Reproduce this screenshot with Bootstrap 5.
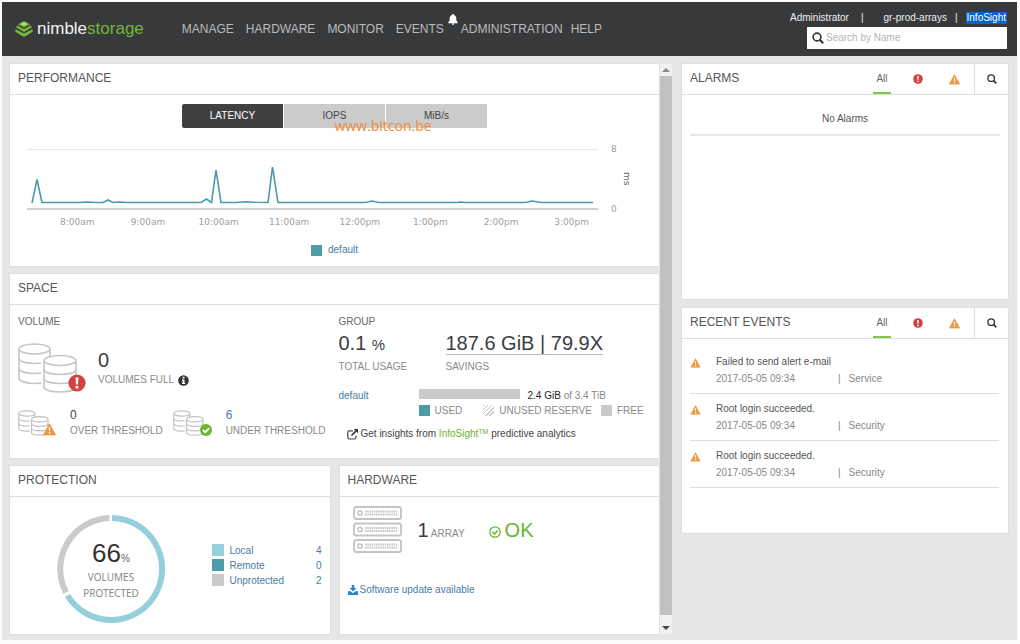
<!DOCTYPE html>
<html lang="en">
<head>
<meta charset="utf-8">
<meta name="viewport" content="width=device-width, initial-scale=1">
<title>Nimble Storage – gr-prod-arrays</title>
<link href="https://cdn.jsdelivr.net/npm/bootstrap@5.3.0/dist/css/bootstrap.min.css" rel="stylesheet">
<style>
:root { --line:#dedede; --teal:#4b9ca8; --aqua:#95cfdb; --silver:#cacaca; --leaf:#6ab42d; --link:#4a7ba6; }
body { font-family:"Liberation Sans",Arial,sans-serif; font-size:10px; line-height:16px; color:#666; background:#fcfcfc; }
a { color:var(--link); text-decoration:none; }
button { font:inherit; color:inherit; background:none; border:0; padding:0; }
svg { display:block; flex:none; }
h2,h3 { margin:0; font-weight:400; }
.app { min-height:calc(100vh - 6px); margin:2px 3px 4px 2px; background:#e6e6e6; }
.topbar { min-height:54px; background:#38393b; padding:0 10px 0 13px; }
.brand-name { font-size:17px; line-height:24px; color:#f2f2f2; }
.brand-name span { color:#75b63b; }
.main-nav { font-size:12px; gap:12px; margin-left:38px; }
.main-nav a { color:#bcbcbc; }
.bell { top:-7px; right:-14px; }
.after-bell { margin-left:5px; }
.help-item { margin-left:-4px; }
.tools { padding-top:10px; gap:3px; }
.user-links a, .user-links { color:#f0f0f0; line-height:12px; }
.user-links .insight { background:#0b62cc; color:#fff; padding:0 1px; }
.search-box { width:200px; height:22px; background:#fff; padding:0 5px; gap:2px; }
.search-box input { border:0; outline:0; font-size:10px; width:100%; padding:0; color:#444; }
.search-box input::placeholder { color:#b5b5b5; opacity:1; }
.workspace { padding:8px 9px 6px 8px; }
.scroll-area { flex:2 1 10px; }
.col-main { flex:1 1 0; min-width:0; gap:8px; }
.col-side { flex:1 1 0; min-width:0; gap:9px; margin-left:10px; }
.panel { background:#fff; box-shadow:0 0 1px #bbb; }
.panel-top { min-height:31px; border-bottom:1px solid var(--line); padding-left:8px; color:#555; }
.panel-top h2 { font-size:12px; line-height:29px; margin-right:auto; }
.track { width:12px; background:#f1f1f1; margin-left:1px; padding:4px 0; }
.thumb { background:#c1c1c1; margin:4px 0 11px; }
.metric-tabs { width:47%; margin-top:9px; gap:1px; }
.metric-tabs button { flex:1; line-height:24px; background:#cbcbcb; color:#444; }
.metric-tabs button:first-child { background:#404041; color:#fff; border-radius:2px 0 0 2px; }
.metric-tabs button:last-child { border-radius:0 2px 2px 0; }
.stamp { left:50%; top:12px; font:14px/20px "Open Sans",sans-serif; color:#f08a35; }
.chart-row { margin:17px 22px 0 17px; }
.plot { flex:1; min-width:0; }
.plot svg { width:100%; height:68px; }
.axis { font-family:"DejaVu Sans",sans-serif; font-size:9px; color:#a0a0a0; }
.y-axis { width:39px; height:68px; padding-left:13px; line-height:8px; gap:5px; }
.y-axis .unit { writing-mode:vertical-rl; color:#666; align-self:center; line-height:10px; }
.x-axis { margin:0 52px 0 32px; }
.x-axis span { flex:1 0 0; text-align:center; line-height:18px; }
.swatch { width:11px; height:11px; flex:none; }
.teal { background:var(--teal); } .aqua { background:var(--aqua); } .silver { background:var(--silver); }
.hatch { background:repeating-linear-gradient(135deg,#c4c4c4 0 1px,#fff 1px 3px); }
.chart-legend { margin-top:11px; padding-bottom:8px; gap:6px; }
.space-body { padding:9px 8px 16px; }
.space-body h3 { font-size:10px; line-height:16px; color:#666; }
.figure-lg { font-size:20px; line-height:24px; color:#3b3d42; }
.figure-sm { font-size:12px; line-height:15px; color:#444; }
.linked { color:var(--link); }
.dim { color:#8a8a8a; }
.full-row { margin-top:13px; gap:12px; }
.threshold-row { margin-top:15px; gap:10px; line-height:15px; }
.threshold-row > div { gap:14px; }
.usage { width:107px; }
.usage .figure-lg, .savings .figure-lg { line-height:21px; margin-top:3px; }
.savings .figure-lg { border-bottom:1px solid #bbb; }
.usage small { font-size:15px; }
.cap { margin-top:4px; }
.group-col { padding-left:4px; }
.vol-row { margin-top:13px; line-height:15px; }
.vol-row > a { width:80px; }
.bar { width:101px; height:10px; margin-bottom:4px; }
.key { margin-left:80px; gap:5px; line-height:15px; white-space:nowrap; }
.insights { margin:8px 0 0 8px; gap:3px; color:#444; }
.insights a { color:var(--leaf); }
.insights sup { font-size:7px; line-height:0; }
.pair { gap:10px; }
.pair .panel { flex:1 1 0; min-width:0; }
.donut { margin:18px 0 10px 47px; display:grid; width:108px; }
.donut > * { grid-area:1/1; }
.donut-text { font:10px/16px "Noto Sans",sans-serif; color:#8a8a8a; }
.donut-text strong { font:26px/32px "Liberation Sans",sans-serif; color:#333; }
.donut-text small { font:10px/16px "Liberation Sans",sans-serif; color:#666; }
.protect-key { line-height:15px; color:var(--link); margin:0 8px 0 auto; width:110px; }
.protect-key td { padding:0; }
.protect-key td:last-child { text-align:right; }
.protect-key .swatch { margin-right:6px; width:12px; height:12px; }
.array-row { padding:9px 0 0 13px; }
.array-row .ok { color:var(--leaf); font-size:20px; line-height:24px; }
.update { padding:28px 9px 36px 8px; gap:2px; }
.filters button { width:36px; height:30px; }
.filters button.active { color:#666; }
.filters button.active span { display:block; width:18px; padding-top:2px; line-height:26px; border-bottom:2px solid #86c44f; margin:0 auto; }
.filters .find { width:34px; margin-left:2px; border-left:1px solid var(--line); }
.no-items { margin:0 8px; padding:16px 0 7px; border-bottom:2px solid #e9e9e9; text-align:center; color:#555; }
.alarms { padding-bottom:163px; }
.events { padding:8px 9px 45px 8px; }
.events li { padding:7px 0 6px; border-bottom:1px solid #dedede; gap:15px; }
.events .title { color:#555; }
.events .meta { line-height:17px; color:#888; }
.events .when { width:122px; }
</style>
</head>
<body>
<svg width="0" height="0" class="position-absolute" aria-hidden="true">
  <symbol id="i-search" viewBox="0 0 12 12"><circle cx="5" cy="5" r="3.9" fill="none" stroke="#333" stroke-width="1.6"/><path d="M7.800 7.800 11.200 11.200" stroke="#333" stroke-width="2.100"/></symbol>
  <symbol id="i-error" viewBox="0 0 18 18"><circle cx="9" cy="9" r="8.6" fill="#d1433f"/><path d="M7.5 3.5h3l-.5 7H8zM7.6 12h2.8v2.6H7.6z" fill="#fff"/></symbol>
  <symbol id="i-warn" viewBox="0 0 12 12"><path d="M6 .8 11.6 11H.4z" fill="#ec9a45" stroke="#ec9a45" stroke-linejoin="round" stroke-width=".8"/><path d="M5.3 4h1.4l-.3 3.6h-.8zM5.3 8.5h1.4v1.3H5.3z" fill="#fff"/></symbol>
  <symbol id="i-disks" viewBox="0 0 60 50"><g fill="#fff" stroke="#c6c6c6" stroke-width="1.6">
    <path d="M1 6v29c0 3 7 5.500 15.500 5.500S32 38 32 35V6"/><path d="M1 15.500c0 3 7 5 15.500 5s15.500-2 15.500-5M1 25.500c0 3 7 5 15.500 5s15.500-2 15.500-5" fill="none"/><ellipse cx="16.500" cy="6" rx="15.500" ry="5"/>
    <path d="M26 18v26c0 3 7 5 16 5s16-2 16-5V18" stroke="#fff" stroke-width="6"/><path d="M26 18v26c0 3 7 5 16 5s16-2 16-5V18"/><path d="M26 26.500c0 3 7 5 16 5s16-2 16-5M26 35.500c0 3 7 5 16 5s16-2 16-5" fill="none"/><ellipse cx="42" cy="17.500" rx="16" ry="5"/></g></symbol>
  <symbol id="i-disks-sm" viewBox="0 0 31 26"><g fill="#fff" stroke="#c2c2c2" stroke-width="1.200">
    <path d="M.8 3.500v15c0 1.500 3.500 2.700 8 2.700s8-1.200 8-2.700v-15"/><path d="M.8 8.500c0 1.500 3.500 2.500 8 2.500s8-1 8-2.500M.8 13.500c0 1.500 3.500 2.500 8 2.500s8-1 8-2.500" fill="none"/><ellipse cx="8.800" cy="3.500" rx="8" ry="2.600"/>
    <path d="M13.500 9.500v13c0 1.500 3.500 2.700 8.300 2.700s8.200-1.200 8.200-2.700v-13" stroke="#fff" stroke-width="3.500"/><path d="M13.500 9.500v13c0 1.500 3.500 2.700 8.300 2.700s8.200-1.200 8.200-2.700v-13"/><path d="M13.500 13.800c0 1.500 3.500 2.500 8.300 2.500s8.200-1 8.200-2.500M13.500 18.300c0 1.500 3.500 2.500 8.300 2.500s8.200-1 8.200-2.500" fill="none"/><ellipse cx="21.800" cy="9.300" rx="8.200" ry="2.600"/></g></symbol>
</svg>
<div class="app">
  <header class="topbar d-flex">
    <a href="#" class="d-flex align-items-center gap-1">
      <svg width="18" height="16" viewBox="0 0 18 16"><g fill="#75b63b"><path d="M9 0 15 3.200 9 6.400 3 3.200z"/><path d="M2.500 4.600 9 8l6.500-3.400L17 6.200 9 10.900 1 6.200z"/><path d="M.8 8.200 9 12.600l8.200-4.400L18 10.600 9 16l-9-5.400z"/></g><path d="M9 1.500 12 3 9 4.500 6 3z" fill="#bfe39a"/></svg>
      <span class="brand-name">nimble<span>storage</span></span>
    </a>
    <nav class="d-flex align-items-center">
      <ul class="main-nav list-unstyled d-flex mb-0">
        <li><a href="#">MANAGE</a></li><li><a href="#">HARDWARE</a></li><li><a href="#">MONITOR</a></li>
        <li class="position-relative"><a href="#">EVENTS</a>
          <svg class="bell position-absolute" width="10" height="11" viewBox="0 0 10 11"><path d="M5 0c.7 0 1 .5 1 1 1.800.6 2.300 2 2.300 4 0 1.800.7 2.700 1.500 3.500v.7H.2v-.7C1 7.700 1.700 6.800 1.700 5c0-2 .5-3.400 2.300-4 0-.5.300-1 1-1zM3.700 9.600h2.600C6.200 10.500 5.700 11 5 11s-1.200-.5-1.300-1.400z" fill="#fff"/></svg></li>
        <li class="after-bell"><a href="#">ADMINISTRATION</a></li><li class="help-item"><a href="#">HELP</a></li>
      </ul>
    </nav>
    <div class="tools ms-auto d-flex flex-column align-items-end">
      <div class="user-links d-flex"><a href="#">Administrator</a><span class="ms-2 me-3 ps-1">|</span><a href="#" class="ms-1">gr-prod-arrays</a><span class="mx-2">|</span><a href="#" class="insight">InfoSight</a></div>
      <label class="search-box d-flex align-items-center"><svg width="12" height="12"><use href="#i-search"/></svg><input type="text" placeholder="Search by Name" aria-label="Search by Name"></label>
    </div>
  </header>

  <main class="workspace d-flex align-items-start">
    <div class="scroll-area d-flex align-items-stretch">
    <div class="col-main d-flex flex-column">
      <section class="panel">
        <div class="panel-top"><h2>PERFORMANCE</h2></div>
        <div class="metric-tabs position-relative d-flex mx-auto">
          <button type="button">LATENCY</button><button type="button">IOPS</button><button type="button">MiB/s</button>
          <div class="stamp position-absolute">www.bitcon.be</div>
        </div>
        <div class="chart-row d-flex">
          <div class="plot"><svg viewBox="0 0 571 68" preserveAspectRatio="none">
            <path d="M0 4.500H571" stroke="#e6e6e6"/><path d="M0 64H571" stroke="#d0d0d0" stroke-width="2"/>
            <path d="M5 58 10 34.500 15 57.500H52L60 57 70 57.500H76L81 55 86 57.500 93 57 100 57.500H174L179.500 54 184.500 57.500 189 25 194 57.500H210L218 56.700 228 57.300 241 57.500 245.500 22 251 57.500H338L345 56 352 57.500H430L434 57 438 57.500H498L505 56 514 57.500H566" fill="none" stroke="#4b9aac" stroke-width="1.600"/></svg></div>
          <div class="axis y-axis d-flex">
            <div class="d-flex flex-column justify-content-between"><span>8</span><span>0</span></div>
            <span class="unit">ms</span>
          </div>
        </div>
        <div class="axis x-axis d-flex"><span>8:00am</span><span>9:00am</span><span>10:00am</span><span>11:00am</span><span>12:00pm</span><span>1:00pm</span><span>2:00pm</span><span>3:00pm</span></div>
        <div class="chart-legend d-flex justify-content-center align-items-center"><i class="swatch teal"></i><a href="#">default</a></div>
      </section>

      <section class="panel">
        <div class="panel-top"><h2>SPACE</h2></div>
        <div class="space-body d-flex">
          <div class="w-50">
            <h3>VOLUME</h3>
            <div class="full-row d-flex align-items-center">
              <svg width="68" height="50" viewBox="0 0 68 50"><use href="#i-disks" width="60" height="50"/><use href="#i-error" x="50" y="31" width="18" height="18"/></svg>
              <div><div class="figure-lg">0</div><div class="dim d-flex align-items-center">VOLUMES FULL<svg class="ms-1" width="11" height="11" viewBox="0 0 11 11"><circle cx="5.500" cy="5.500" r="5.300" fill="#333"/><path d="M4.600 1.800h1.900v1.600H4.600zM4 4.400h2.500v3.500h.7V9H3.900V7.900h.7V5.500H4z" fill="#fff"/></svg></div></div>
            </div>
            <div class="threshold-row d-flex">
              <div class="d-flex align-items-center"><svg width="38" height="26" viewBox="0 0 38 26"><use href="#i-disks-sm" width="31" height="26"/><use href="#i-warn" x="25" y="13" width="13" height="13"/></svg><div><div class="figure-sm">0</div><div class="dim">OVER THRESHOLD</div></div></div>
              <div class="d-flex align-items-center"><svg width="39" height="26" viewBox="0 0 39 26"><use href="#i-disks-sm" width="31" height="26"/><circle cx="33" cy="20" r="6" fill="#6cb52d"/><path d="m30 20 2.200 2.200 4-4" fill="none" stroke="#fff" stroke-width="1.800"/></svg><div><a href="#" class="figure-sm linked d-block">6</a><div class="dim">UNDER THRESHOLD</div></div></div>
            </div>
          </div>
          <div class="w-50 group-col">
            <h3>GROUP</h3>
            <div class="d-flex">
              <div class="usage"><div class="figure-lg">0.1 <small>%</small></div><div class="dim cap">TOTAL USAGE</div></div>
              <div class="savings"><div class="figure-lg">187.6 GiB | 79.9X</div><div class="dim cap">SAVINGS</div></div>
            </div>
            <div class="vol-row d-flex align-items-center"><a href="#">default</a><div class="bar silver"></div><div class="ms-2 dim"><span class="text-dark">2.4 GiB</span> of 3.4 TiB</div></div>
            <div class="key dim d-flex align-items-center"><i class="swatch teal"></i><span class="me-3">USED</span><i class="swatch hatch"></i><span class="me-1">UNUSED RESERVE</span><i class="swatch silver"></i><span>FREE</span></div>
            <div class="insights d-flex align-items-center"><svg width="11" height="11" viewBox="0 0 11 11"><path d="M6 1.800H2.300Q.8 1.800.8 3.300v5.200Q.8 10 2.300 10h5.200Q9 10 9 8.500V6.800" fill="none" stroke="#444" stroke-width="1.200"/><path d="m4.500 6.500 4.600-4.600" stroke="#333" stroke-width="1.700"/><path d="M6.700 0H11v4.300z" fill="#333"/></svg><span>Get insights from <a href="#">InfoSight<sup>TM</sup></a> predictive analytics</span></div>
          </div>
        </div>
      </section>

      <div class="pair d-flex">
        <section class="panel">
          <div class="panel-top"><h2>PROTECTION</h2></div>
          <div class="d-flex align-items-center">
            <div class="donut">
              <svg width="108" height="108" viewBox="0 0 108 108" fill="none" stroke-width="6"><path d="M55 3A51 51 0 1 1 10.500 80.500" stroke="#95cfdb"/><path d="M9 77.500A51 51 0 0 1 52.500 3" stroke="#cacaca"/></svg>
              <div class="donut-text text-center align-self-center"><div><strong>66</strong><small>%</small></div>VOLUMES<br>PROTECTED</div>
            </div>
            <table class="protect-key">
              <tr><td><div class="d-flex align-items-center"><i class="swatch aqua"></i>Local</div></td><td>4</td></tr>
              <tr><td><div class="d-flex align-items-center"><i class="swatch teal"></i>Remote</div></td><td>0</td></tr>
              <tr><td><div class="d-flex align-items-center"><i class="swatch silver"></i>Unprotected</div></td><td>2</td></tr>
            </table>
          </div>
        </section>
        <section class="panel">
          <div class="panel-top"><h2>HARDWARE</h2></div>
          <div class="array-row d-flex align-items-center">
            <svg width="49" height="48" viewBox="0 0 49 48"><g id="unit"><rect x="1" y="1" width="47" height="12" rx="2" fill="#fff" stroke="#c3c3c3" stroke-width="1.800"/><circle cx="7" cy="7" r="2.200" fill="none" stroke="#bbb" stroke-width="1.300"/><path d="M12 5.500h33M12 8.500h33" stroke="#c6c6c6" stroke-width="2" stroke-dasharray="1.500 .7"/></g><use href="#unit" y="16.500"/><use href="#unit" y="33"/></svg>
            <div class="ms-3"><span class="figure-lg">1</span> <span class="dim">ARRAY</span></div>
            <div class="ok ms-4 d-flex align-items-center"><svg class="mt-1 me-1" width="12" height="12" viewBox="0 0 12 12" fill="none" stroke="#6ab42d"><circle cx="6" cy="6" r="5.200" stroke-width="1.300"/><path d="m3.300 5.700 2.200 2.300L8.800 4.500" stroke-width="1.600"/></svg>OK</div>
          </div>
          <a href="#" class="update d-flex align-items-center"><svg width="10" height="10" viewBox="0 0 10 10" fill="#2b83cc"><path d="M3.700 0h2.600v3h2.200L5 6.500 1.500 3h2.200zM0 6.300h2.600L5 8.200l2.400-1.900H10V10H0z"/></svg>Software update available</a>
        </section>
      </div>
    </div>
    <div class="track d-flex flex-column align-items-center" aria-hidden="true">
      <svg width="8" height="4" viewBox="0 0 8 4"><path d="M0 4 4 0l4 4z" fill="#888"/></svg>
      <div class="thumb w-100 flex-grow-1"></div>
      <svg width="8" height="4" viewBox="0 0 8 4"><path d="M0 0h8L4 4z" fill="#444"/></svg>
    </div>
    </div>

    <div class="col-side d-flex flex-column">
      <section class="panel">
        <div class="panel-top d-flex"><h2>ALARMS</h2>
          <div class="filters d-flex"><button type="button" class="active"><span>All</span></button><button type="button" aria-label="Critical"><svg class="mx-auto" width="10" height="10"><use href="#i-error"/></svg></button><button type="button" aria-label="Warning"><svg class="mx-auto" width="11" height="11"><use href="#i-warn"/></svg></button><button type="button" class="find" aria-label="Search alarms"><svg class="mx-auto" width="10" height="10"><use href="#i-search"/></svg></button></div>
        </div>
        <div class="alarms"><div class="no-items">No Alarms</div></div>
      </section>
      <section class="panel">
        <div class="panel-top d-flex"><h2>RECENT EVENTS</h2>
          <div class="filters d-flex"><button type="button" class="active"><span>All</span></button><button type="button" aria-label="Critical"><svg class="mx-auto" width="10" height="10"><use href="#i-error"/></svg></button><button type="button" aria-label="Warning"><svg class="mx-auto" width="11" height="11"><use href="#i-warn"/></svg></button><button type="button" class="find" aria-label="Search events"><svg class="mx-auto" width="10" height="10"><use href="#i-search"/></svg></button></div>
        </div>
        <ul class="events list-unstyled mb-0">
          <li class="d-flex"><svg class="mt-1" width="11" height="10"><use href="#i-warn"/></svg><div><div class="title">Failed to send alert e-mail</div><div class="meta d-flex"><span class="when">2017-05-05 09:34</span><span class="me-2">|</span><span>Service</span></div></div></li>
          <li class="d-flex"><svg class="mt-1" width="11" height="10"><use href="#i-warn"/></svg><div><div class="title">Root login succeeded.</div><div class="meta d-flex"><span class="when">2017-05-05 09:34</span><span class="me-2">|</span><span>Security</span></div></div></li>
          <li class="d-flex"><svg class="mt-1" width="11" height="10"><use href="#i-warn"/></svg><div><div class="title">Root login succeeded.</div><div class="meta d-flex"><span class="when">2017-05-05 09:34</span><span class="me-2">|</span><span>Security</span></div></div></li>
        </ul>
      </section>
    </div>
  </main>
</div>
<script src="https://cdn.jsdelivr.net/npm/bootstrap@5.3.0/dist/js/bootstrap.bundle.min.js"></script>
</body>
</html>
